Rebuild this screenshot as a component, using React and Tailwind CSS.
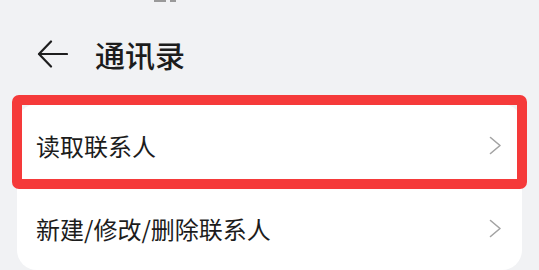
const font = { fontFamily: '"Noto Sans CJK SC", "Noto Sans", sans-serif' };

const Chevron = () => (
  <svg width="13" height="19" viewBox="0 0 13 19" fill="none">
    <path d="M1.5 1.5 L11 9.5 L1.5 17.5" stroke="#a3a3a3" strokeWidth="1.6" strokeLinecap="round" strokeLinejoin="round" />
  </svg>
);

const Row = ({ label, highlight }) => (
  <div className="relative h-[83px] flex items-center justify-between pl-[19px] pr-[20px]">
    <span className="text-[24px] text-[#1c1c1c] leading-none">{label}</span>
    <Chevron />
    {highlight && (
      <div className="absolute -left-[5px] -right-[5px] -top-[9px] -bottom-[2px] border-[10px] border-[#f53a3a] rounded-[7px]"></div>
    )}
  </div>
);

export default function App() {
  return (
    <div className="w-[539px] h-[270px] bg-[#f1f2f4] overflow-hidden" style={font}>
      {/* cut-off status bar */}
      <div className="h-[2px] flex gap-[4px] pl-[154px]">
        <div className="w-[12px] h-[2px] bg-[#9a9a9a]"></div>
        <div className="w-[6px] h-[2px] bg-[#9a9a9a]"></div>
      </div>

      <div className="mt-[26px] h-[52px] flex items-center pl-[37px]">
        <svg width="31" height="28" viewBox="0 0 31 28" fill="none">
          <path d="M30 14 H2.5" stroke="#1e1e1e" strokeWidth="2.2" strokeLinecap="round" />
          <path d="M14 1.5 L2 14 L14 26.5" stroke="#1e1e1e" strokeWidth="2.2" strokeLinecap="round" strokeLinejoin="round" />
        </svg>
        <span className="ml-[27px] text-[30px] font-medium text-[#1c1c1c] leading-none">通讯录</span>
      </div>

      <div className="mt-[24px] mx-[17px] bg-white rounded-[20px]">
        <Row label="读取联系人" highlight />
        <Row label="新建/修改/删除联系人" />
      </div>
    </div>
  );
}
